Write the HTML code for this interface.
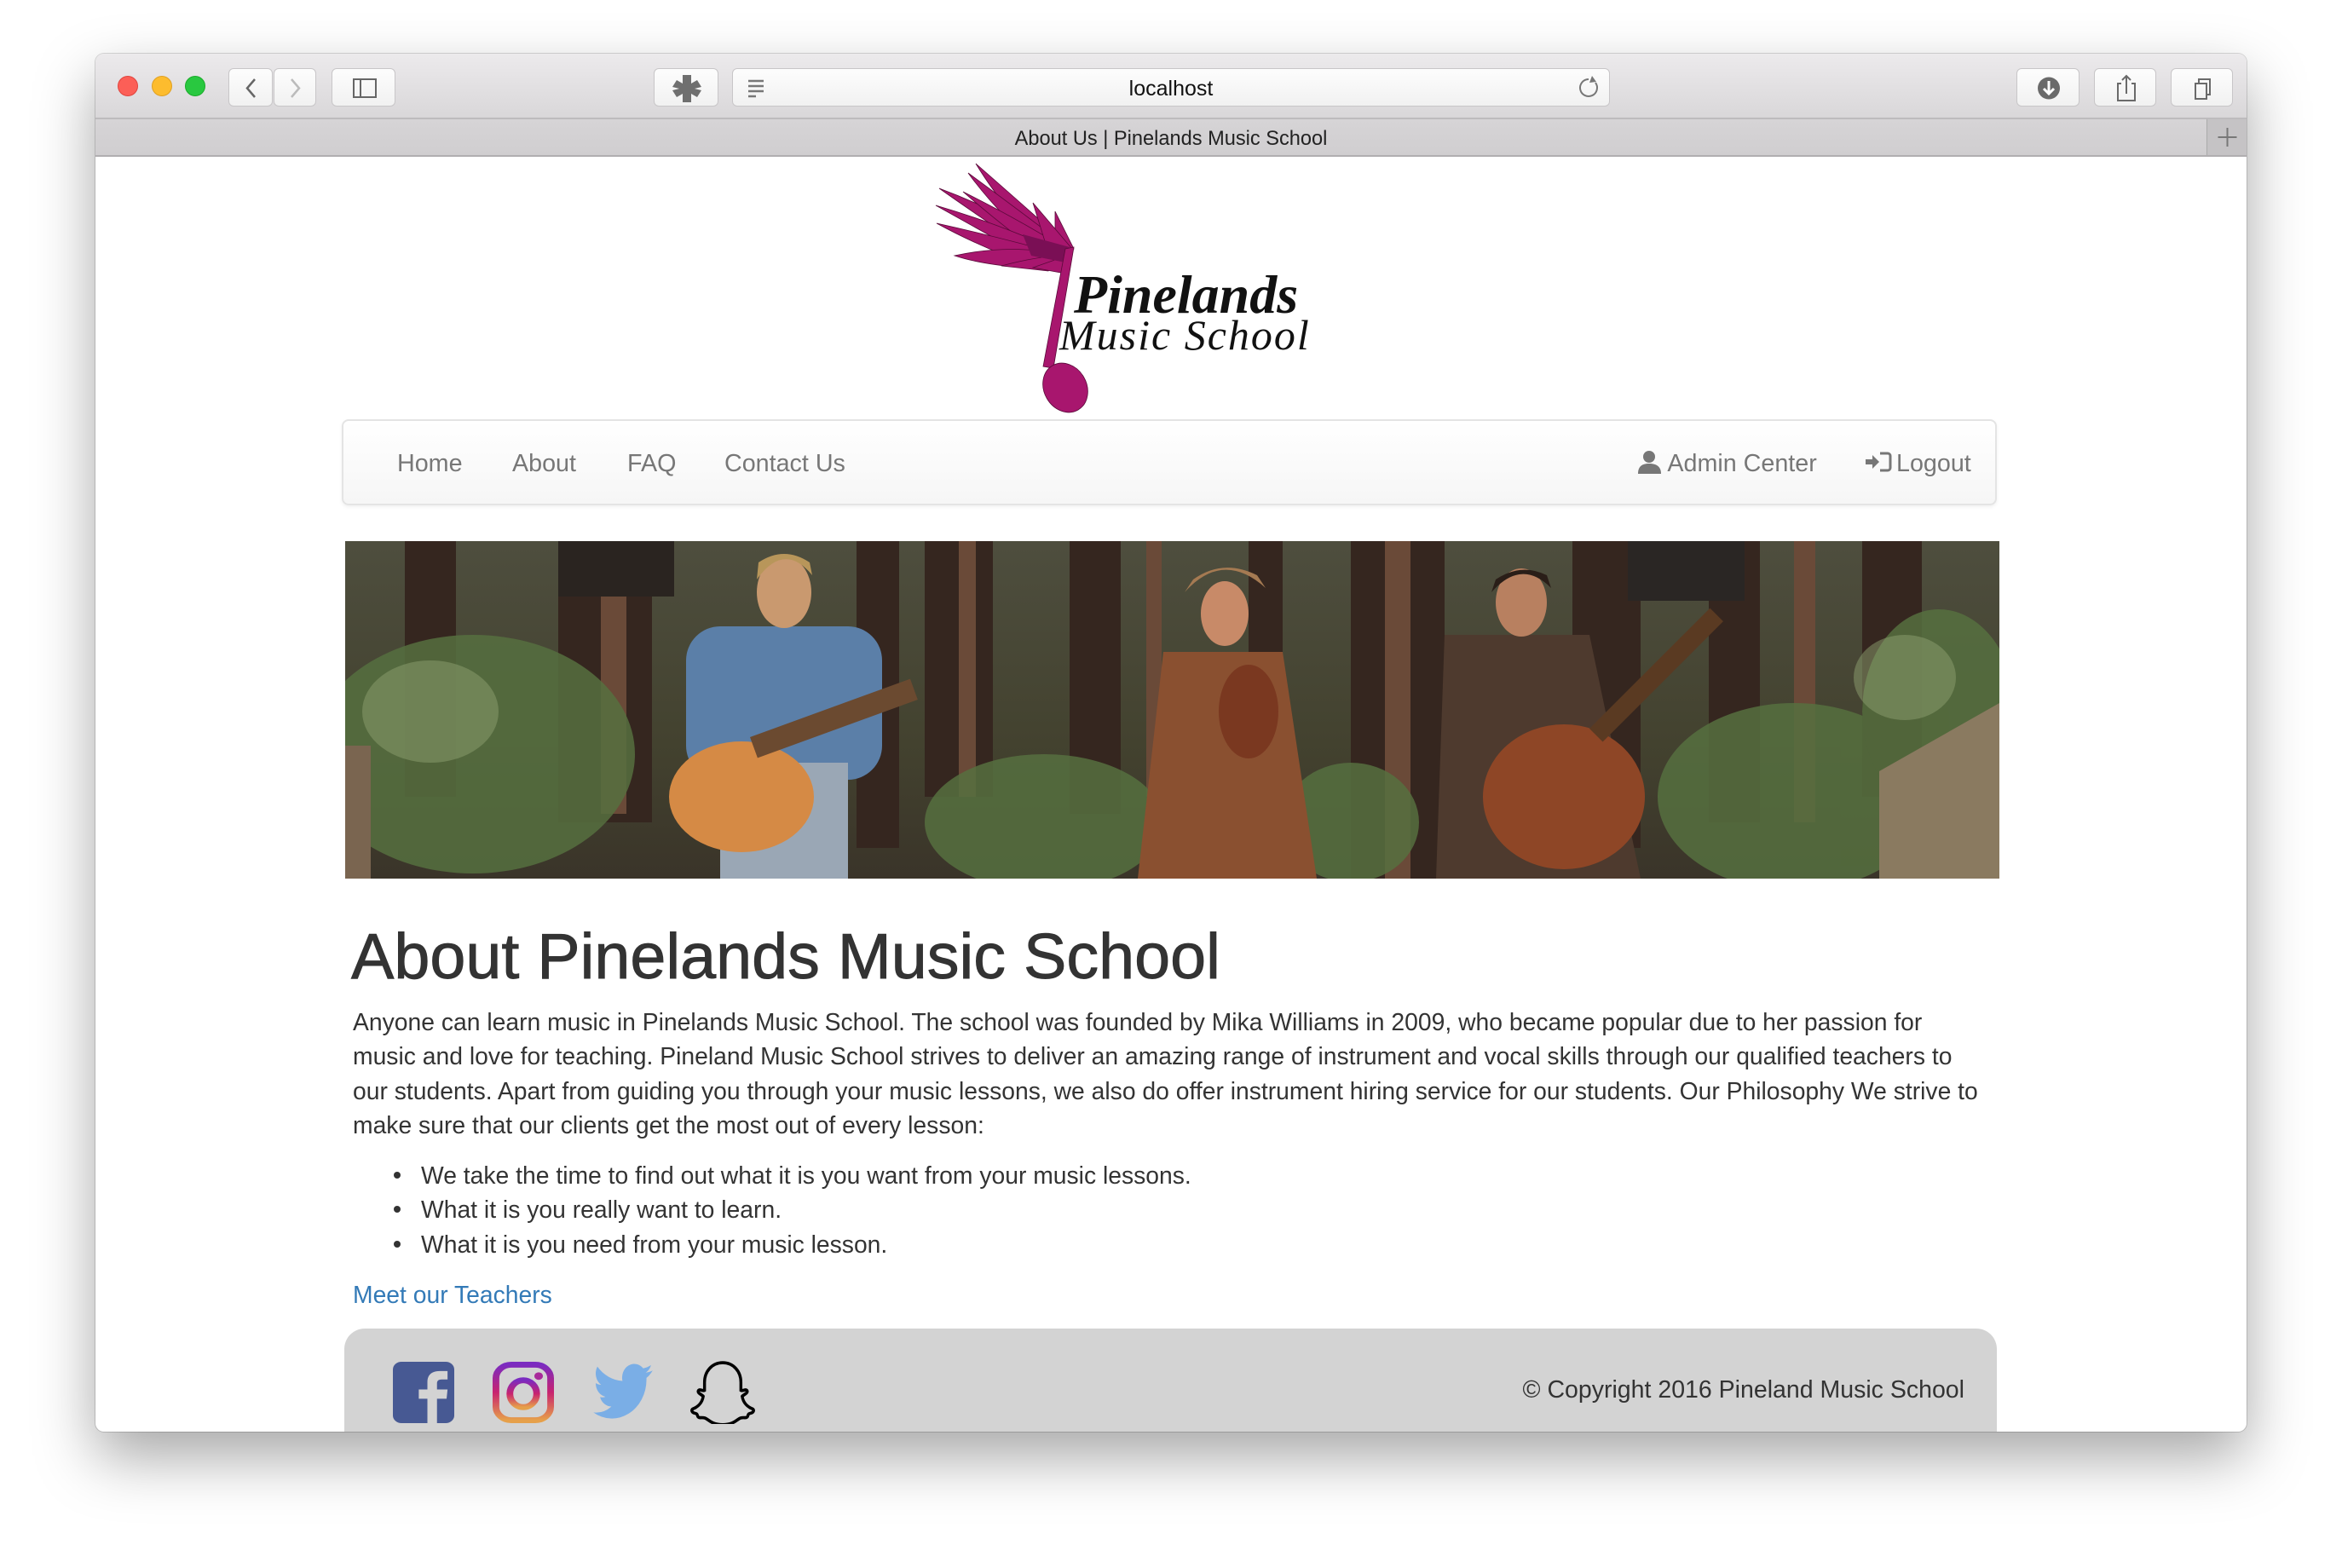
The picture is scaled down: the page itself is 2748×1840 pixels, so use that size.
<!DOCTYPE html>
<html><head><meta charset="utf-8">
<style>
*{margin:0;padding:0;box-sizing:border-box}
html,body{width:2748px;height:1840px;background:#fff;overflow:hidden;font-family:"Liberation Sans",Arial,sans-serif}
.win{position:absolute;left:112px;top:63px;width:2524px;height:1617px;border-radius:10px;overflow:hidden;box-shadow:0 30px 70px rgba(0,0,0,.35),0 0 0 1px rgba(0,0,0,.15);background:#fff}
.tb{position:absolute;left:0;top:0;width:100%;height:77px;background:linear-gradient(#eceaec,#d9d7d9);border-bottom:2px solid #bdbbbd}
.tab{position:absolute;left:0;top:77px;width:100%;height:44px;background:linear-gradient(#d6d4d6,#d0ced0);border-bottom:2px solid #b0aeb0;text-align:center;font-size:23.6px;line-height:46px;color:#222}
.light{position:absolute;top:26px;width:24px;height:24px;border-radius:50%}
.btn{position:absolute;top:17px;height:45px;background:linear-gradient(#fdfdfd,#f1f1f1);border:1px solid #c8c6c8;border-radius:6px}
.abs{position:absolute}
.nav{position:absolute;left:289px;top:429px;width:1942px;height:101px;border:2px solid #e4e4e4;border-radius:8px;background:linear-gradient(#fff,#f6f6f6);box-shadow:0 2px 4px rgba(0,0,0,.06)}
.nav span{position:absolute;top:34px;font-size:28.7px;color:#777;white-space:nowrap}
.txt{position:absolute;left:302px;color:#333;font-size:28.3px;white-space:nowrap}
.footer{position:absolute;left:292px;top:1496px;width:1939px;height:160px;background:#d3d3d3;border-radius:24px}
</style></head><body>
<div class="win">
 <div class="tb">
  <div class="light" style="left:26px;background:#fc5f57;border:1px solid #e0443e"></div>
  <div class="light" style="left:66px;background:#fdbc2e;border:1px solid #dfa023"></div>
  <div class="light" style="left:105px;background:#29c840;border:1px solid #1aab29"></div>
  <div class="btn" style="left:156px;width:52px"><svg width="52" height="45"><path d="M30 12 L21 22.5 L30 33" fill="none" stroke="#666" stroke-width="2.5"/></svg></div>
  <div class="btn" style="left:209px;width:50px"><svg width="50" height="45"><path d="M20 12 L29 22.5 L20 33" fill="none" stroke="#bbb" stroke-width="2.5"/></svg></div>
  <div class="btn" style="left:277px;width:75px"><svg width="75" height="45"><rect x="25" y="12" width="26" height="21" fill="none" stroke="#666" stroke-width="2"/><line x1="33" y1="12" x2="33" y2="33" stroke="#666" stroke-width="2"/></svg></div>
  <div class="btn" style="left:655px;width:76px"><svg width="76" height="45"><path d="M33 7h10v10l7-4 5 8-8 2 8 2-5 8-7-4v10H33V29l-7 4-5-8 8-2-8-2 5-8 7 4z" fill="#6f6f6f"/></svg></div>
  <div class="btn" style="left:747px;width:1030px"><svg width="40" height="45" style="position:absolute;left:8px;top:0"><path d="M10 14h18M10 20h18M10 26h18M10 32h9" stroke="#777" stroke-width="2.5"/></svg><div style="position:absolute;left:0;width:100%;text-align:center;top:9px;font-size:25px;color:#111">localhost</div><svg width="40" height="45" style="position:absolute;right:4px;top:0"><path d="M20 12a10 10 0 1 0 8 4" fill="none" stroke="#777" stroke-width="2"/><path d="M24 8l5 7-8 1z" fill="#777"/></svg></div>
  <div class="btn" style="left:2254px;width:74px"><svg width="74" height="45"><circle cx="37" cy="22.5" r="13" fill="#6a6a6a"/><path d="M37 14v14M31 23l6 6 6-6" stroke="#fff" stroke-width="3" fill="none"/></svg></div>
  <div class="btn" style="left:2345px;width:73px"><svg width="73" height="45"><path d="M31 17h-4v20h20V17h-4M37 29V8M32 13l5-5 5 5" stroke="#6a6a6a" stroke-width="2" fill="none"/></svg></div>
  <div class="btn" style="left:2435px;width:73px"><svg width="73" height="45"><rect x="28" y="17" width="13" height="18" fill="none" stroke="#6a6a6a" stroke-width="2"/><path d="M32 17v-5h13v18h-4" fill="none" stroke="#6a6a6a" stroke-width="2"/></svg></div>
 </div>
 <div class="tab">About Us | Pinelands Music School
  <div class="abs" style="right:0;top:0;width:47px;height:42px;background:#c5c3c5;border-left:1px solid #aaa"><svg width="47" height="42"><path d="M23.5 10v22M12.5 21h22" stroke="#777" stroke-width="2"/></svg></div>
 </div>

 <svg class="abs" style="left:983px;top:123px" width="460" height="300" viewBox="1095 186 460 300">
  <g fill="#a8166e" stroke="#5a0a3a" stroke-width="0.8">
   <path d="M1145 192 Q1200 240 1258 292 L1236 300 Q1180 250 1145 192Z"/>
   <path d="M1136 203 Q1200 250 1255 292 L1228 300 Q1170 250 1136 203Z"/>
   <path d="M1102 221 Q1180 250 1250 295 L1222 303 Q1150 255 1102 221Z"/>
   <path d="M1130 225 Q1200 260 1250 292 L1226 302 Q1170 260 1130 225Z"/>
   <path d="M1098 241 Q1180 265 1248 298 L1218 308 Q1150 270 1098 241Z"/>
   <path d="M1099 262 Q1180 280 1250 300 L1212 312 Q1150 290 1099 262Z"/>
   <path d="M1120 300 Q1190 285 1250 300 L1200 314 Q1150 310 1120 300Z"/>
   <path d="M1175 312 Q1220 300 1250 300 L1230 318 Z"/>
   <path d="M1212 314 L1252 300 L1245 320 Z"/>
   <path d="M1238 248 L1260 292 L1238 292 Z"/>
   <path d="M1212 238 L1258 292 L1230 296 Z"/>
  </g>
  <path d="M1200 275 L1255 290 L1250 308 L1210 300 Z" fill="#7a0f55"/>
  <path d="M1250 292 L1260 290 L1236 432 L1224 430 Z" fill="#a8166e" stroke="#5a0a3a" stroke-width="0.8"/>
  <ellipse cx="1250" cy="455" rx="25" ry="30" transform="rotate(-30 1250 455)" fill="#a8166e" stroke="#5a0a3a" stroke-width="0.8"/>
  <text x="1260" y="367" font-family="Liberation Serif,serif" font-style="italic" font-weight="bold" font-size="64" fill="#111">Pinelands</text>
  <text x="1243" y="410" font-family="Liberation Serif,serif" font-style="italic" font-size="50" fill="#111" letter-spacing="2">Music School</text>
 </svg>

 <div class="nav">
  <span style="left:63px">Home</span><span style="left:198px">About</span><span style="left:333px">FAQ</span><span style="left:447px">Contact Us</span>
  <span style="left:1518px"><svg width="29" height="28" style="vertical-align:-3px"><circle cx="14" cy="8" r="7" fill="#777"/><path d="M1 28c0-9 5-12 13-12s14 3 14 12z" fill="#777"/></svg> Admin Center</span>
  <span style="left:1784px"><svg width="38" height="28" style="vertical-align:-3px"><path d="M2 11h8V6l8 8-8 8v-5H2z" fill="#777"/><path d="M19 4h9a3 3 0 0 1 3 3v14a3 3 0 0 1-3 3h-9" fill="none" stroke="#777" stroke-width="3"/></svg>Logout</span>
 </div>

 <svg class="abs" style="left:293px;top:572px" width="1941" height="396" viewBox="0 0 1941 396" preserveAspectRatio="none">
  <defs><linearGradient id="bg" x1="0" y1="0" x2="0" y2="1"><stop offset="0" stop-color="#4e4e3e"/><stop offset=".6" stop-color="#43422f"/><stop offset="1" stop-color="#3a3429"/></linearGradient></defs>
  <rect width="1941" height="396" fill="url(#bg)"/>
  <g fill="#35261f">
   <rect x="70" y="0" width="60" height="300"/><rect x="250" y="0" width="110" height="330"/><rect x="600" y="0" width="50" height="360"/><rect x="680" y="0" width="80" height="300"/><rect x="850" y="0" width="60" height="320"/><rect x="1060" y="0" width="40" height="300"/><rect x="1180" y="0" width="110" height="396"/><rect x="1440" y="0" width="80" height="360"/><rect x="1600" y="0" width="60" height="330"/><rect x="1780" y="0" width="70" height="300"/>
  </g>
  <g fill="#6a4a38"><rect x="300" y="60" width="30" height="260"/><rect x="720" y="0" width="20" height="300"/><rect x="1220" y="0" width="30" height="396"/><rect x="1700" y="0" width="25" height="330"/><rect x="940" y="0" width="18" height="300"/></g>
  <g fill="#56703f" opacity=".85"><ellipse cx="150" cy="250" rx="190" ry="140"/><ellipse cx="820" cy="330" rx="140" ry="80"/><ellipse cx="1180" cy="330" rx="80" ry="70"/><ellipse cx="1700" cy="300" rx="160" ry="110"/><ellipse cx="1870" cy="200" rx="90" ry="120"/></g>
  <g fill="#8da070" opacity=".5"><ellipse cx="100" cy="200" rx="80" ry="60"/><ellipse cx="1830" cy="160" rx="60" ry="50"/></g>
  <rect x="250" y="0" width="136" height="65" fill="#2a2420"/><rect x="1505" y="0" width="137" height="70" fill="#2a2624"/>
  <rect x="0" y="240" width="30" height="156" fill="#7a6550"/><path d="M1800 270 L1941 190 L1941 396 L1800 396Z" fill="#8a7a60"/>
  <rect x="400" y="100" width="230" height="180" rx="40" fill="#5b7fa8"/><rect x="440" y="260" width="150" height="136" fill="#9aa7b5"/>
  <ellipse cx="515" cy="60" rx="32" ry="42" fill="#c9996f"/><path d="M483 45 Q515 0 548 40 L545 25 Q515 5 485 25Z" fill="#b8965a"/>
  <ellipse cx="465" cy="300" rx="85" ry="65" fill="#d58a45"/><rect x="475" y="230" width="200" height="26" transform="rotate(-20 475 230)" fill="#6b4a30"/>
  <path d="M960 130 L1100 130 L1140 396 L930 396Z" fill="#8a5030"/><ellipse cx="1032" cy="85" rx="28" ry="38" fill="#c88a68"/><path d="M985 60 Q1030 10 1080 55 L1070 40 Q1030 20 995 45Z" fill="#a57a52"/>
  <ellipse cx="1060" cy="200" rx="35" ry="55" fill="#7a3820"/>
  <path d="M1290 110 L1460 110 L1520 396 L1280 396Z" fill="#4e3a2e"/><ellipse cx="1380" cy="72" rx="30" ry="40" fill="#b88060"/><path d="M1345 60 Q1380 20 1415 55 L1410 40 Q1380 25 1350 45Z" fill="#2a1e18"/>
  <ellipse cx="1430" cy="300" rx="95" ry="85" fill="#8e4626"/><rect x="1460" y="220" width="200" height="22" transform="rotate(-45 1460 220)" fill="#5a3a22"/>
 </svg>

 <div class="txt" style="top:1016px;font-size:75.5px;left:300px;color:#333;-webkit-text-stroke:0.9px #333">About Pinelands Music School</div>
 <div class="txt" style="top:1116px;line-height:40.3px;left:302px">Anyone can learn music in Pinelands Music School. The school was founded by Mika Williams in 2009, who became popular due to her passion for<br>music and love for teaching. Pineland Music School strives to deliver an amazing range of instrument and vocal skills through our qualified teachers to<br>our students. Apart from guiding you through your music lessons, we also do offer instrument hiring service for our students. Our Philosophy We strive to<br>make sure that our clients get the most out of every lesson:</div>
 <div class="txt" style="top:1296px;line-height:40.3px;left:382px">We take the time to find out what it is you want from your music lessons.<br>What it is you really want to learn.<br>What it is you need from your music lesson.</div>
 <div class="abs" style="left:350px;top:1312px;width:8px;height:8px;border-radius:50%;background:#333"></div>
 <div class="abs" style="left:350px;top:1352px;width:8px;height:8px;border-radius:50%;background:#333"></div>
 <div class="abs" style="left:350px;top:1393px;width:8px;height:8px;border-radius:50%;background:#333"></div>
 <div class="txt" style="top:1440px;color:#337ab7">Meet our Teachers</div>

 <div class="footer">
  <svg class="abs" style="left:57px;top:39px" width="72" height="72" viewBox="0 0 64 73" preserveAspectRatio="none"><rect width="64" height="73" rx="9" fill="#475993"/><path d="M36 73V44h-9V33h9v-9c0-9 5-13 13-13h8v10h-6c-4 0-5 2-5 5v7h11l-1 11H46v29z" fill="#d3d3d3"/></svg>
  <svg class="abs" style="left:174px;top:39px" width="72" height="72" viewBox="0 0 64 73" preserveAspectRatio="none"><defs><linearGradient id="ig" x1="0" y1="0" x2="0" y2="1"><stop offset="0" stop-color="#7b2bc0"/><stop offset=".5" stop-color="#c8236f"/><stop offset="1" stop-color="#e6a04a"/></linearGradient></defs><rect x="3.5" y="3.5" width="57" height="66" rx="16" fill="none" stroke="url(#ig)" stroke-width="7"/><ellipse cx="32" cy="38" rx="14" ry="16" fill="none" stroke="url(#ig)" stroke-width="7"/><circle cx="48" cy="17" r="4.5" fill="#a82a9a"/></svg>
  <svg class="abs" style="left:289px;top:40px" width="76" height="68" viewBox="0 2 24 19" preserveAspectRatio="none"><path d="M23 4.6a9 9 0 0 1-2.6.7 4.6 4.6 0 0 0 2-2.5 9 9 0 0 1-2.9 1.1A4.5 4.5 0 0 0 11.8 8 12.8 12.8 0 0 1 2.5 3.3a4.5 4.5 0 0 0 1.4 6 4.5 4.5 0 0 1-2-.6 4.5 4.5 0 0 0 3.6 4.5 4.5 4.5 0 0 1-2 .1 4.5 4.5 0 0 0 4.2 3.1A9 9 0 0 1 1 18.3 12.8 12.8 0 0 0 20.7 7.5V7A9 9 0 0 0 23 4.6z" fill="#7aaee6"/></svg>
  <svg class="abs" style="left:404px;top:38px" width="80" height="74" viewBox="1.5 1 21 18" preserveAspectRatio="none"><path d="M12 1.5c3.3 0 5.6 2.5 5.6 5.6v2.3c.5.3 1.5-.5 1.9.1.4.7-1.2 1.2-1.5 1.6.3 1.8 1.6 3 3.2 3.6.6.3.3 1-.5 1.2-.9.2-.8.3-1 .9-.3.7-1.3.2-2.2.5-1.2.4-2 1.9-5.5 1.9s-4.3-1.5-5.5-1.9c-.9-.3-1.9.2-2.2-.5-.2-.6-.1-.7-1-.9-.8-.2-1.1-.9-.5-1.2 1.6-.6 2.9-1.8 3.2-3.6-.3-.4-1.9-.9-1.5-1.6.4-.6 1.4.2 1.9-.1V7.1c0-3.1 2.3-5.6 5.6-5.6z" fill="none" stroke="#000" stroke-width=".9"/></svg>
  <div class="abs" style="right:38px;top:56px;font-size:28.5px;color:#333">© Copyright 2016 Pineland Music School</div>
 </div>
</div>
</body></html>
